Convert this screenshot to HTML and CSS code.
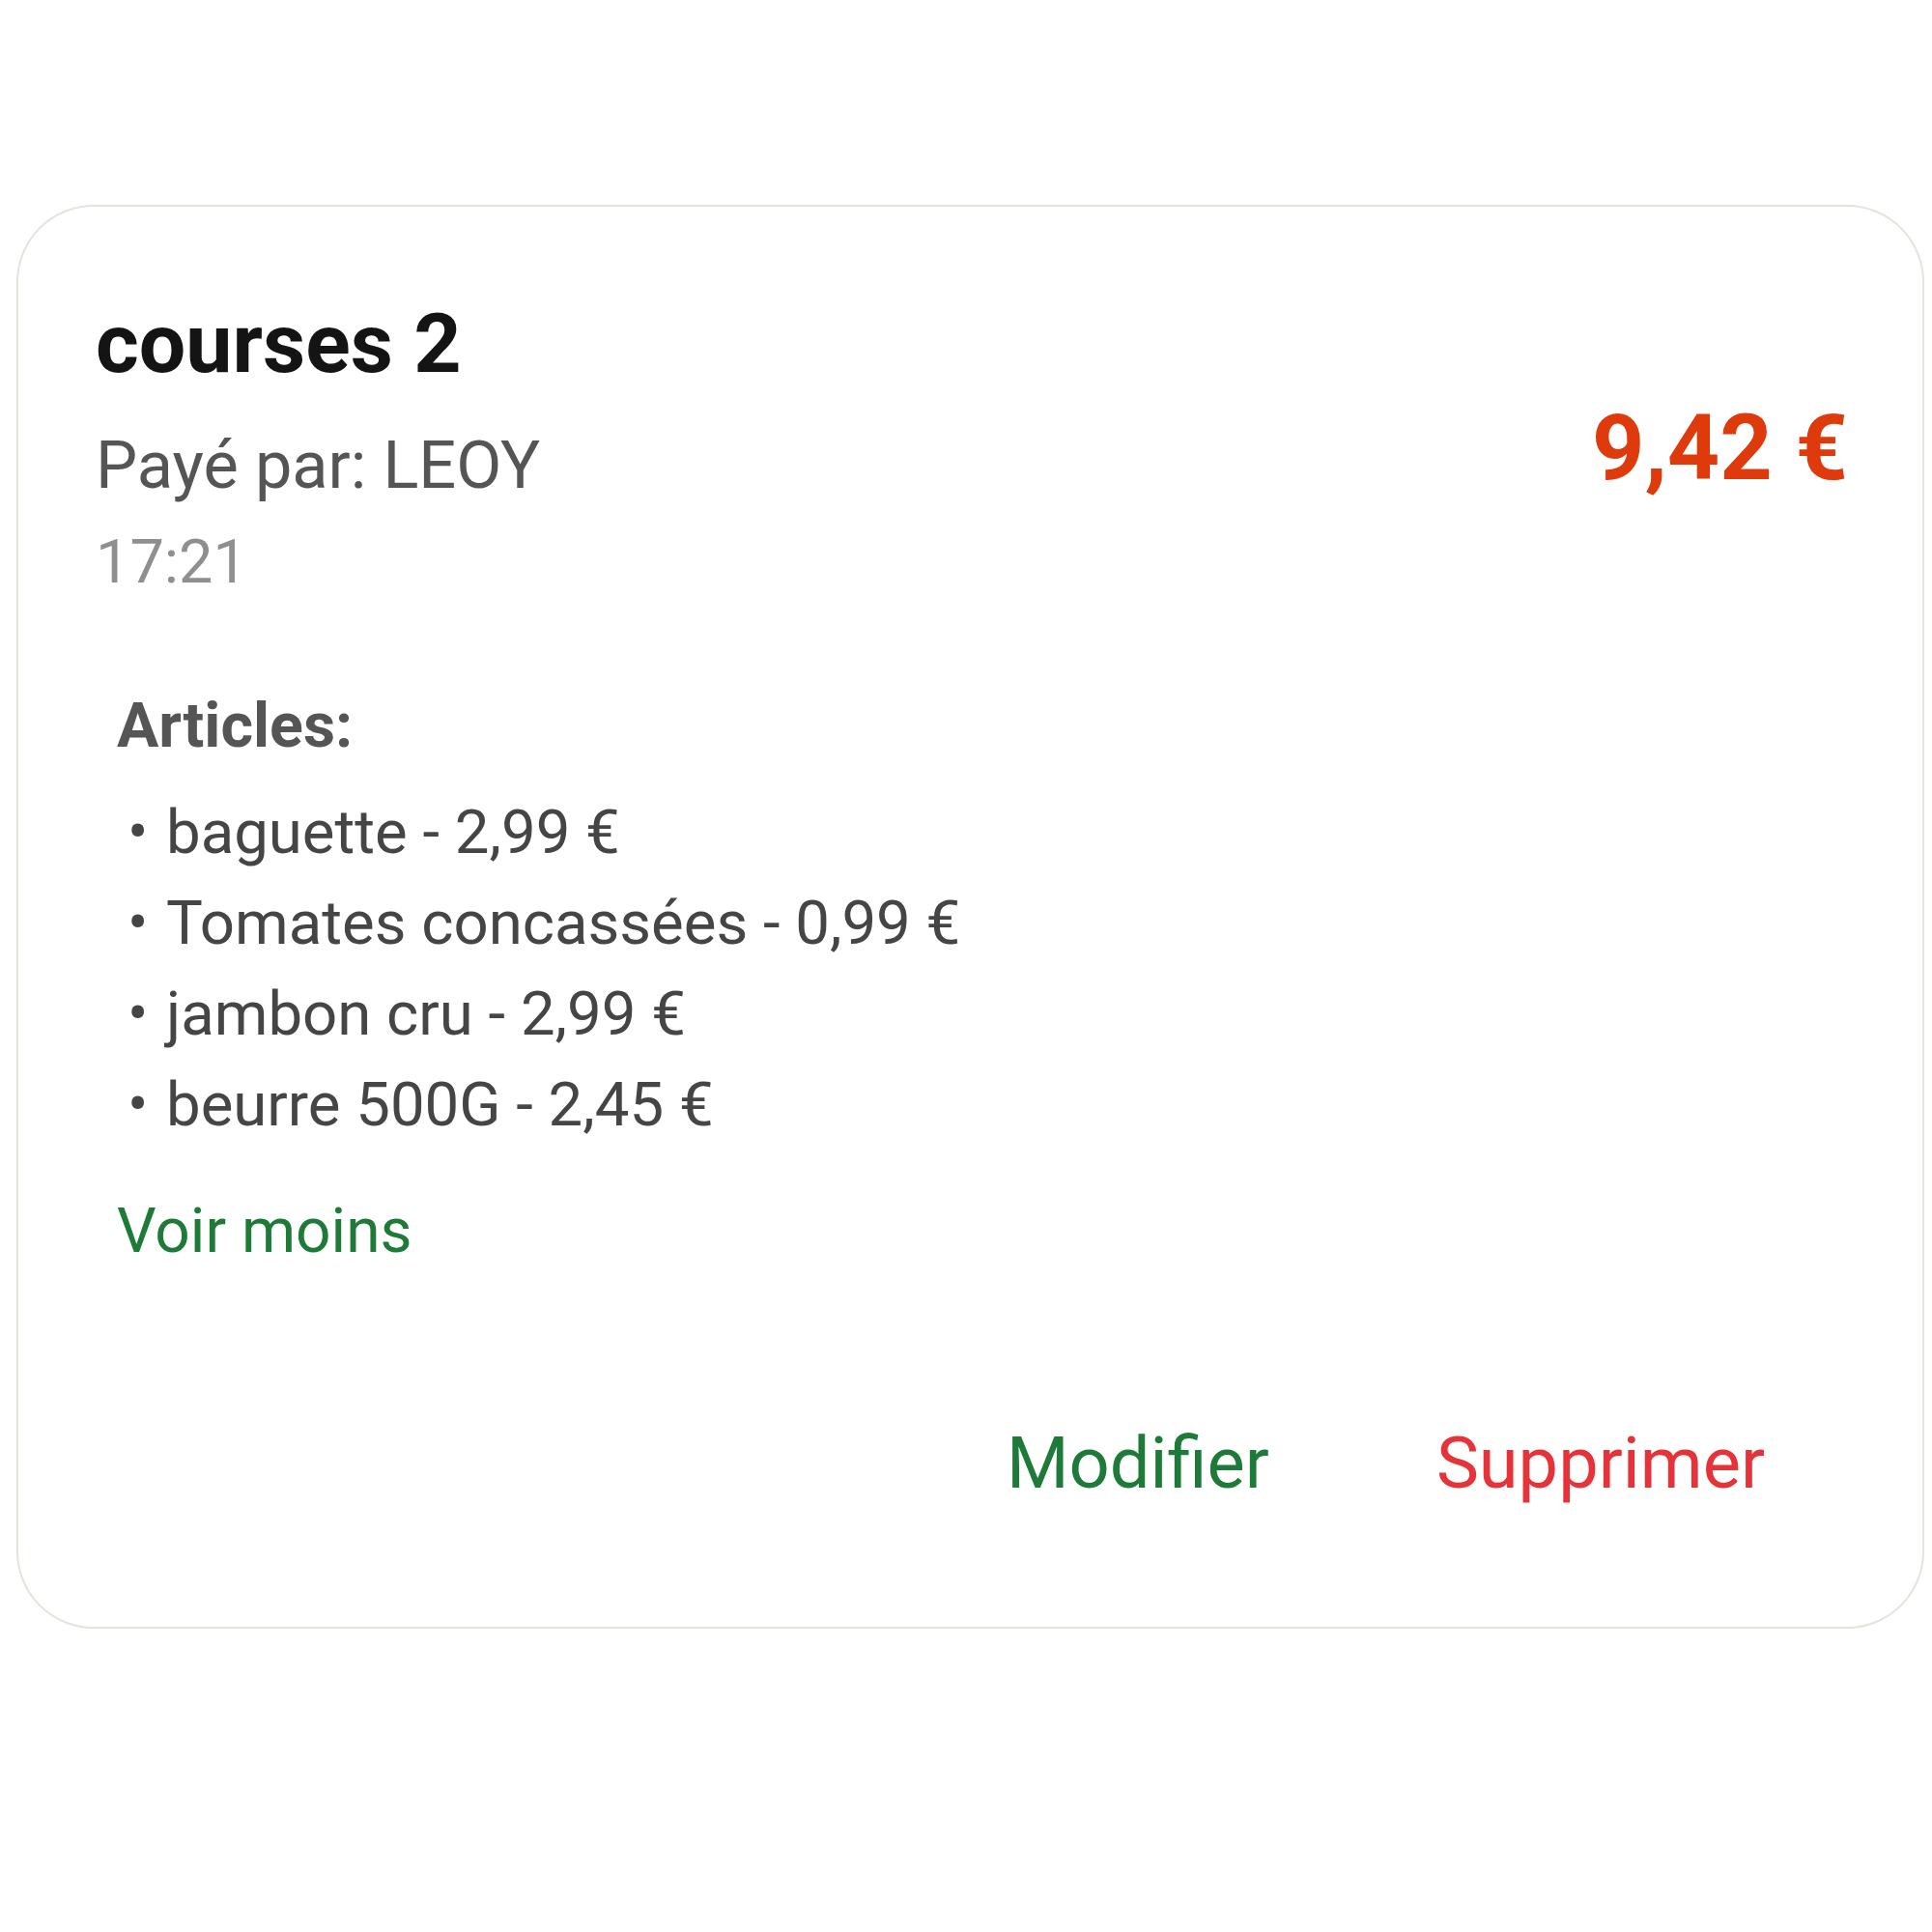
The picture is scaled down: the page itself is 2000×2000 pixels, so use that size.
FILE: index.html
```html
<!DOCTYPE html>
<html lang="fr">
<head>
<meta charset="utf-8">
<title>courses 2</title>
<link rel="stylesheet" href="styles.css">
</head>
<body>
<div class="card">
  <div class="header">
    <div class="info">
      <div class="title">courses 2</div>
      <div class="payer">Payé par: LEOY</div>
      <div class="time">17:21</div>
    </div>
    <div class="amount">9,42 €</div>
  </div>
  <div class="articles">
    <div class="articles-title">Articles:</div>
    <ul class="items">
      <li>baguette - 2,99 €</li>
      <li>Tomates concassées - 0,99 €</li>
      <li>jambon cru - 2,99 €</li>
      <li>beurre 500G - 2,45 €</li>
    </ul>
    <div class="toggle">Voir moins</div>
  </div>
  <div class="actions">
    <span class="btn edit">Modifier</span>
    <span class="btn delete">Supprimer</span>
  </div>
</div>
</body>
</html>
```
FILE: styles.css
```css
html, body {
  margin: 0;
  padding: 0;
  background: #ffffff;
}

body {
  font-family: Roboto, "Liberation Sans", sans-serif;
  width: 2000px;
  height: 2000px;
  padding-top: 212px;
  box-sizing: border-box;
}

.card {
  box-sizing: border-box;
  width: 1975px;
  margin-left: 17px;
  border: 2px solid #e6e2dc;
  border-radius: 80px;
  background: #ffffff;
  padding: 92px 77px 124px 80px;
}

.header {
  display: flex;
  justify-content: space-between;
  align-items: center;
}

.info {
  display: flex;
  flex-direction: column;
}

.title {
  font-size: 86px;
  line-height: 100px;
  font-weight: 700;
  color: #141414;
}

.payer {
  margin-top: 31px;
  font-size: 68.5px;
  line-height: 90px;
  color: #555555;
}

.time {
  margin-top: 15px;
  font-size: 63px;
  line-height: 80px;
  color: #8f8f8f;
}

.amount {
  font-size: 95px;
  line-height: 112px;
  font-weight: 700;
  color: #df3a0c;
}

.articles {
  margin-top: 89px;
  margin-left: 22px;
}

.articles-title {
  font-size: 64.5px;
  line-height: 80px;
  font-weight: 700;
  color: #555555;
}

.items {
  list-style: none;
  margin: 24px 0 0 9px;
  padding: 0;
}

.items li {
  font-size: 63.5px;
  line-height: 94px;
  color: #454545;
}

.items li::before {
  content: "•";
  display: inline-block;
  width: 42px;
  text-indent: 2px;
}

.toggle {
  margin-top: 44px;
  font-size: 64px;
  line-height: 80px;
  color: #1d7a37;
}

.actions {
  margin-top: 155px;
  display: flex;
  justify-content: flex-end;
  gap: 173px;
  padding-right: 86px;
}

.btn {
  font-size: 74px;
  line-height: 90px;
}

.edit {
  color: #1e7a38;
}

.delete {
  color: #e6333a;
}
```
